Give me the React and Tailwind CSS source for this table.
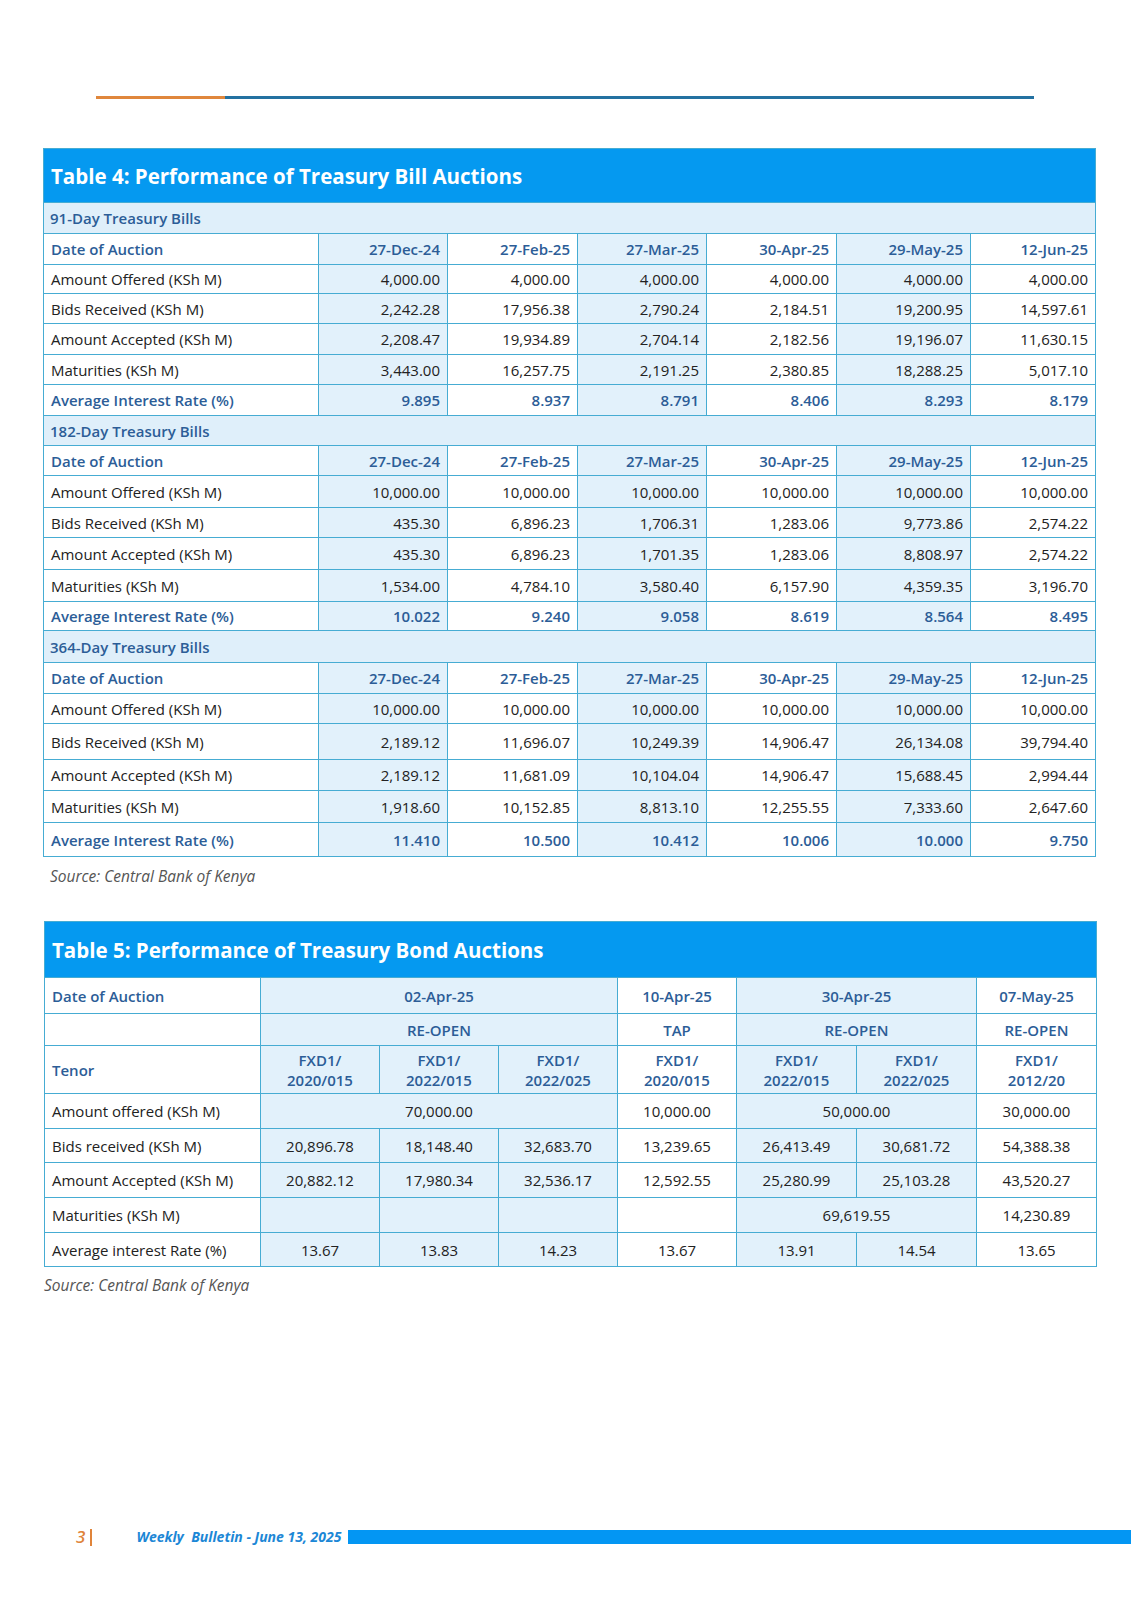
import React from "react";

const B = "border-[#46acd3]";
const COLS4 = "grid grid-cols-[275px_129px_130px_129px_130px_134px_125px]";
const COLS5 = "grid grid-cols-[216px_119px_119px_119px_119px_120px_120px_120px]";
const BLUE_BG = "bg-[#e2f1fb]";

const dates4 = ["27-Dec-24", "27-Feb-25", "27-Mar-25", "30-Apr-25", "29-May-25", "12-Jun-25"];

const sections = [
  {
    title: "91-Day Treasury Bills",
    hs: "h-[31px]",
    hd: "h-[31px]",
    rows: [
      { h: "h-[29px]", label: "Amount Offered (KSh M)", v: ["4,000.00", "4,000.00", "4,000.00", "4,000.00", "4,000.00", "4,000.00"] },
      { h: "h-[30px]", label: "Bids Received (KSh M)", v: ["2,242.28", "17,956.38", "2,790.24", "2,184.51", "19,200.95", "14,597.61"] },
      { h: "h-[31px]", label: "Amount Accepted (KSh M)", v: ["2,208.47", "19,934.89", "2,704.14", "2,182.56", "19,196.07", "11,630.15"] },
      { h: "h-[30px]", label: "Maturities (KSh M)", v: ["3,443.00", "16,257.75", "2,191.25", "2,380.85", "18,288.25", "5,017.10"] },
    ],
    ha: "h-[31px]",
    avg: ["9.895", "8.937", "8.791", "8.406", "8.293", "8.179"],
  },
  {
    title: "182-Day Treasury Bills",
    hs: "h-[30px]",
    hd: "h-[30px]",
    rows: [
      { h: "h-[32px]", label: "Amount Offered (KSh M)", v: ["10,000.00", "10,000.00", "10,000.00", "10,000.00", "10,000.00", "10,000.00"] },
      { h: "h-[30px]", label: "Bids Received (KSh M)", v: ["435.30", "6,896.23", "1,706.31", "1,283.06", "9,773.86", "2,574.22"] },
      { h: "h-[32px]", label: "Amount Accepted (KSh M)", v: ["435.30", "6,896.23", "1,701.35", "1,283.06", "8,808.97", "2,574.22"] },
      { h: "h-[32px]", label: "Maturities (KSh M)", v: ["1,534.00", "4,784.10", "3,580.40", "6,157.90", "4,359.35", "3,196.70"] },
    ],
    ha: "h-[29px]",
    avg: ["10.022", "9.240", "9.058", "8.619", "8.564", "8.495"],
  },
  {
    title: "364-Day Treasury Bills",
    hs: "h-[32px]",
    hd: "h-[31px]",
    rows: [
      { h: "h-[30px]", label: "Amount Offered (KSh M)", v: ["10,000.00", "10,000.00", "10,000.00", "10,000.00", "10,000.00", "10,000.00"] },
      { h: "h-[36px]", label: "Bids Received (KSh M)", v: ["2,189.12", "11,696.07", "10,249.39", "14,906.47", "26,134.08", "39,794.40"] },
      { h: "h-[31px]", label: "Amount Accepted (KSh M)", v: ["2,189.12", "11,681.09", "10,104.04", "14,906.47", "15,688.45", "2,994.44"] },
      { h: "h-[32px]", label: "Maturities (KSh M)", v: ["1,918.60", "10,152.85", "8,813.10", "12,255.55", "7,333.60", "2,647.60"] },
    ],
    ha: "h-[34px]",
    avg: ["11.410", "10.500", "10.412", "10.006", "10.000", "9.750"],
  },
];

function Cell({ className = "", children }) {
  return (
    <div className={`flex items-center border-r border-b ${B} px-[7px] ${className}`}>{children}</div>
  );
}

function Table4() {
  return (
    <div className={`w-[1053px] border-l border-t ${B}`}>
      <div className={`h-[54px] bg-[#0599f0] border-r border-b ${B} flex items-center px-[7px] text-white font-bold text-[20.5px]`}>
        Table 4: Performance of Treasury Bill Auctions
      </div>
      {sections.map((s) => (
        <React.Fragment key={s.title}>
          <div className={`${s.hs} flex items-center bg-[#dfeffa] border-r border-b ${B} px-[6px] font-semibold text-[15px] text-[#2c5d97]`}>
            {s.title}
          </div>
          <div className={`${COLS4} ${s.hd}`}>
            <Cell className="bg-white font-semibold text-[#2c5d97]">Date of Auction</Cell>
            {dates4.map((d, i) => (
              <Cell key={d} className={`justify-end font-semibold text-[#2c5d97] ${i % 2 === 0 ? BLUE_BG : "bg-white"}`}>
                {d}
              </Cell>
            ))}
          </div>
          {s.rows.map((r) => (
            <div key={r.label} className={`${COLS4} ${r.h}`}>
              <Cell className="bg-white text-[#222]">{r.label}</Cell>
              {r.v.map((v, i) => (
                <Cell key={i} className={`justify-end text-[#222] ${i % 2 === 0 ? BLUE_BG : "bg-white"}`}>
                  {v}
                </Cell>
              ))}
            </div>
          ))}
          <div className={`${COLS4} ${s.ha}`}>
            <Cell className="bg-white font-semibold text-[#2c5d97]">Average Interest Rate (%)</Cell>
            {s.avg.map((v, i) => (
              <Cell key={i} className={`justify-end font-semibold text-[#2c5d97] ${i % 2 === 0 ? BLUE_BG : "bg-white"}`}>
                {v}
              </Cell>
            ))}
          </div>
        </React.Fragment>
      ))}
    </div>
  );
}

const HB = "font-semibold text-[#2c5d97]";
const DT = "text-[#222]";

const rows5 = [
  {
    h: "h-[36px]",
    label: "Date of Auction",
    lb: true,
    cells: [
      { t: "02-Apr-25", span: "col-span-3", bg: BLUE_BG, head: true },
      { t: "10-Apr-25", span: "", bg: "bg-white", head: true },
      { t: "30-Apr-25", span: "col-span-2", bg: BLUE_BG, head: true },
      { t: "07-May-25", span: "", bg: "bg-white", head: true },
    ],
  },
  {
    h: "h-[32px]",
    label: "",
    lb: true,
    cells: [
      { t: "RE-OPEN", span: "col-span-3", bg: BLUE_BG, head: true },
      { t: "TAP", span: "", bg: "bg-white", head: true },
      { t: "RE-OPEN", span: "col-span-2", bg: BLUE_BG, head: true },
      { t: "RE-OPEN", span: "", bg: "bg-white", head: true },
    ],
  },
  {
    h: "h-[48px]",
    label: "Tenor",
    lb: true,
    cells: [
      { t: ["FXD1/", "2020/015"], span: "", bg: BLUE_BG, head: true },
      { t: ["FXD1/", "2022/015"], span: "", bg: BLUE_BG, head: true },
      { t: ["FXD1/", "2022/025"], span: "", bg: BLUE_BG, head: true },
      { t: ["FXD1/", "2020/015"], span: "", bg: "bg-white", head: true },
      { t: ["FXD1/", "2022/015"], span: "", bg: BLUE_BG, head: true },
      { t: ["FXD1/", "2022/025"], span: "", bg: BLUE_BG, head: true },
      { t: ["FXD1/", "2012/20"], span: "", bg: "bg-white", head: true },
    ],
  },
  {
    h: "h-[35px]",
    label: "Amount offered (KSh M)",
    cells: [
      { t: "70,000.00", span: "col-span-3", bg: BLUE_BG },
      { t: "10,000.00", span: "", bg: "bg-white" },
      { t: "50,000.00", span: "col-span-2", bg: BLUE_BG },
      { t: "30,000.00", span: "", bg: "bg-white" },
    ],
  },
  {
    h: "h-[34px]",
    label: "Bids received (KSh M)",
    cells: [
      { t: "20,896.78", span: "", bg: BLUE_BG },
      { t: "18,148.40", span: "", bg: BLUE_BG },
      { t: "32,683.70", span: "", bg: BLUE_BG },
      { t: "13,239.65", span: "", bg: "bg-white" },
      { t: "26,413.49", span: "", bg: BLUE_BG },
      { t: "30,681.72", span: "", bg: BLUE_BG },
      { t: "54,388.38", span: "", bg: "bg-white" },
    ],
  },
  {
    h: "h-[35px]",
    label: "Amount Accepted (KSh M)",
    cells: [
      { t: "20,882.12", span: "", bg: BLUE_BG },
      { t: "17,980.34", span: "", bg: BLUE_BG },
      { t: "32,536.17", span: "", bg: BLUE_BG },
      { t: "12,592.55", span: "", bg: "bg-white" },
      { t: "25,280.99", span: "", bg: BLUE_BG },
      { t: "25,103.28", span: "", bg: BLUE_BG },
      { t: "43,520.27", span: "", bg: "bg-white" },
    ],
  },
  {
    h: "h-[35px]",
    label: "Maturities (KSh M)",
    cells: [
      { t: "", span: "", bg: BLUE_BG },
      { t: "", span: "", bg: BLUE_BG },
      { t: "", span: "", bg: BLUE_BG },
      { t: "", span: "", bg: "bg-white" },
      { t: "69,619.55", span: "col-span-2", bg: BLUE_BG },
      { t: "14,230.89", span: "", bg: "bg-white" },
    ],
  },
  {
    h: "h-[34px]",
    label: "Average interest Rate (%)",
    cells: [
      { t: "13.67", span: "", bg: BLUE_BG },
      { t: "13.83", span: "", bg: BLUE_BG },
      { t: "14.23", span: "", bg: BLUE_BG },
      { t: "13.67", span: "", bg: "bg-white" },
      { t: "13.91", span: "", bg: BLUE_BG },
      { t: "14.54", span: "", bg: BLUE_BG },
      { t: "13.65", span: "", bg: "bg-white" },
    ],
  },
];

function Table5() {
  return (
    <div className={`w-[1053px] border-l border-t ${B}`}>
      <div className={`h-[56px] bg-[#0599f0] border-r border-b ${B} flex items-center px-[7px] text-white font-bold text-[20.5px]`}>
        Table 5: Performance of Treasury Bond Auctions
      </div>
      {rows5.map((r, ri) => (
        <div key={ri} className={`${COLS5} ${r.h}`}>
          <Cell className={`bg-white ${r.lb ? HB : DT}`}>{r.label}</Cell>
          {r.cells.map((c, i) => (
            <Cell key={i} className={`justify-center text-center ${c.span} ${c.bg} ${c.head ? HB : DT}`}>
              {Array.isArray(c.t) ? (
                <div className="leading-[20px]">
                  <div>{c.t[0]}</div>
                  <div>{c.t[1]}</div>
                </div>
              ) : (
                c.t
              )}
            </Cell>
          ))}
        </div>
      ))}
    </div>
  );
}

export default function App() {
  return (
    <div className="w-[1131px] h-[1600px] bg-white flex flex-col font-['Open_Sans','Noto_Sans',sans-serif] text-[15px] leading-[20px]">
      <div className="mt-[96px] ml-[96px] flex w-[938px] h-[3px]">
        <div className="w-[129px] bg-[#e0873c]" />
        <div className="flex-1 bg-[#2371a1]" />
      </div>
      <div className="ml-[43px] mt-[49px]">
        <Table4 />
      </div>
      <p className="ml-[50px] mt-[8px] text-[15.5px] leading-[22px] italic text-[#555]">Source: Central Bank of Kenya</p>
      <div className="ml-[44px] mt-[34px]">
        <Table5 />
      </div>
      <p className="ml-[44px] mt-[7px] text-[15.5px] leading-[22px] italic text-[#555]">Source: Central Bank of Kenya</p>
      <div className="mt-auto mb-[53px] flex items-center h-[20px]">
        <span className="ml-[76px] text-[17px] font-semibold italic text-[#e0843a]">3</span>
        <span className="ml-[5px] w-[2px] h-[17px] bg-[#e0843a]" />
        <span className="ml-[44px] w-[212px] whitespace-pre text-[14px] font-bold italic text-[#1c87d6]">
          Weekly  Bulletin - June 13, 2025
        </span>
        <div className="flex-1 h-[14px] bg-[#0396f3]" />
      </div>
    </div>
  );
}
